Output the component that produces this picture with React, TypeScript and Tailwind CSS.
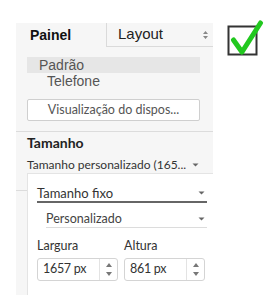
import React from 'react';

const Arrow: React.FC = () => (
    <svg width="7" height="4" viewBox="0 0 7 4" className="shrink-0">
        <path d="M0.5 0.5 L6.5 0.5 L3.5 3.5 Z" fill="#666" />
    </svg>
);

const Spinner: React.FC = () => (
    <div className="flex h-full w-[18px] flex-col items-center justify-center gap-[5px] border-l border-[#e3e3e3]">
        <svg width="6" height="4" viewBox="0 0 6 4">
            <path d="M0 4 L6 4 L3 0 Z" fill="#777" />
        </svg>
        <svg width="6" height="4" viewBox="0 0 6 4">
            <path d="M0 0 L6 0 L3 4 Z" fill="#777" />
        </svg>
    </div>
);

const NumberInput: React.FC<{ value: string }> = ({ value }) => (
    <div className="flex h-[23px] w-[81px] items-center rounded-[3px] border border-[#d4d4d4] bg-white">
        <span className="flex-1 pl-[5px] text-[12.5px] tracking-[-0.3px] text-[#333]">{value}</span>
        <Spinner />
    </div>
);

const Check: React.FC = () => (
    <svg width="38" height="38" viewBox="0 0 38 38">
        <rect x="2.5" y="6.5" width="28" height="28" fill="none" stroke="#333" strokeWidth="2" />
        <path d="M7.5 20 L16 32 L34.5 3" fill="none" stroke="#22c81f" strokeWidth="5" strokeLinecap="round" strokeLinejoin="round" />
    </svg>
);

export default function App() {
    return (
        <div className="flex h-[295px] w-[272px] items-start bg-white font-['Lato',sans-serif] text-[#333]">
            <div className="ml-[16px] mt-[23px] flex h-[272px] w-[197px] flex-col bg-[#f6f6f6]">
                <div className="flex h-[24px] font-['Liberation_Sans',Arial,sans-serif] text-[14px]">
                    <div className="flex w-[90px] items-center pl-[14px] font-bold text-[#111]">Painel</div>
                    <div className="flex flex-1 items-center justify-between border-b border-l border-[#dadada] pl-[11px] pr-[5px] text-[#222]">
                        <span className="text-[15px]">Layout</span>
                        <svg width="5" height="8" viewBox="0 0 5 8">
                            <path d="M0 3 L5 3 L2.5 0 Z M0 5 L5 5 L2.5 8 Z" fill="#888" />
                        </svg>
                    </div>
                </div>

                <div className="mt-[10px] flex flex-col pl-[11px] pr-[13px] font-['Liberation_Sans',Arial,sans-serif] text-[14px] text-[#555]">
                    <div className="flex h-[16px] items-center bg-[#e6e6e6] pl-[12px]">Padrão</div>
                    <div className="flex h-[17px] items-center pl-[20px]">Telefone</div>
                </div>

                <div className="mx-[11px] mt-[9px] flex h-[22px] w-[173px] items-center justify-center rounded-[2px] border border-[#cfcfcf] bg-white text-[12.5px] text-[#555]">
                    Visualização do dispos...
                </div>

                <div className="mt-[10px] border-t border-[#dcdcdc]" />

                <div className="mt-[2px] pl-[11px] text-[14px] font-bold leading-[17px] text-[#222]">Tamanho</div>
                <div className="mt-[6px] flex items-center gap-[6px] pl-[11px] text-[12px] leading-[15px] text-[#333]">
                    <span>Tamanho personalizado (165...</span>
                    <Arrow />
                </div>

                <div className="mt-[1px] flex flex-1">
                    <div className="w-[11px]">
                        <div className="mt-[17px] border-t border-[#dcdcdc]" />
                    </div>
                    <div className="flex flex-1 flex-col border-l border-t border-[#e4e4e4] bg-white pl-[9px] pr-[6px]">
                        <div className="mt-[11px] flex items-center justify-between border-b-2 border-[#666] pr-[2px] text-[13px] leading-[16px] text-[#333]">
                            <span>Tamanho fixo</span>
                            <Arrow />
                        </div>
                        <div className="ml-[9px] mt-[8px] flex items-center justify-between border-b border-[#dcdcdc] pr-[2px] text-[12.5px] leading-[16px] text-[#444]">
                            <span>Personalizado</span>
                            <Arrow />
                        </div>
                        <div className="mt-[10px] flex gap-[6px] text-[12.5px] text-[#333]">
                            <div className="flex flex-col gap-[5px]">
                                <span className="leading-[15px]">Largura</span>
                                <NumberInput value="1657 px" />
                            </div>
                            <div className="flex flex-col gap-[5px]">
                                <span className="leading-[15px]">Altura</span>
                                <NumberInput value="861 px" />
                            </div>
                        </div>
                    </div>
                </div>
            </div>
            <div className="ml-[13px] mt-[20px]">
                <Check />
            </div>
        </div>
    );
}
